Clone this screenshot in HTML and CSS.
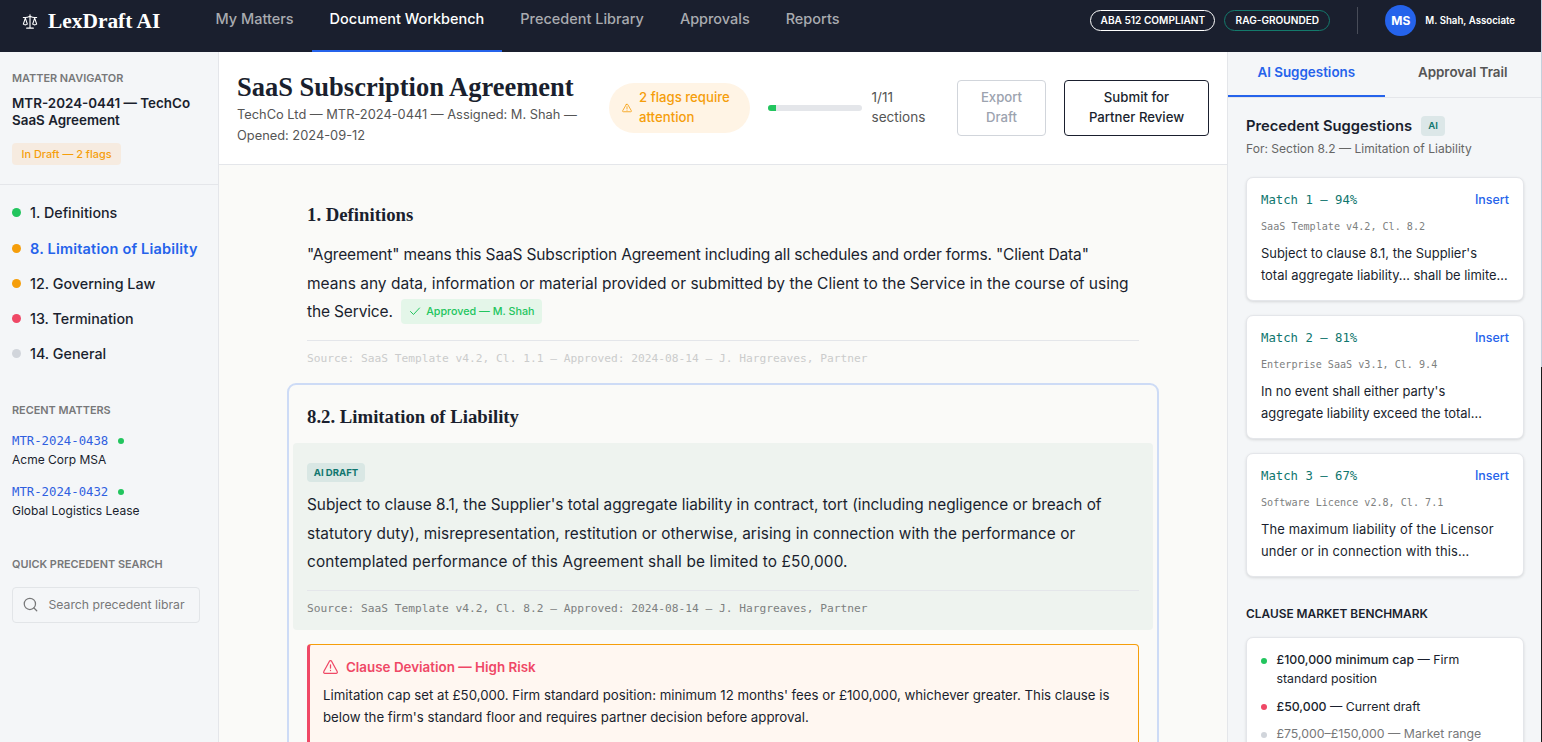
FILE: index.html
```html
<!DOCTYPE html>
<html lang="en">
  <head>
    <meta charset="UTF-8" />
    <title>LexDraft AI</title>
    <link rel="stylesheet" href="styles.css">
  </head>
  <body>
    <header class="topbar">
      <div class="logo">
        <svg class="logo-icon" viewBox="0 0 24 24">
          <path d="m16 16 3-9 3 9c-.9.7-1.900 1-3 1s-2.100-.3-3-1Z" />
          <path d="m2 16 3-9 3 9c-.9.7-1.900 1-3 1s-2.100-.3-3-1Z" />
          <path d="M7 22h10M12 2v20M2 6h3c2 0 5-1 7-2 2 1 5 2 7 2h3" />
        </svg>
        <span class="logo-text">LexDraft AI</span>
      </div>
      <nav class="main-nav">
        <a class="nav-link">My Matters</a>
        <a class="nav-link active">Document Workbench</a>
        <a class="nav-link">Precedent Library</a>
        <a class="nav-link">Approvals</a>
        <a class="nav-link">Reports</a>
      </nav>
      <div class="topbar-right">
        <span class="trust-badge">ABA 512 COMPLIANT</span>
        <span class="trust-badge teal">RAG-GROUNDED</span>
        <span class="divider"></span>
        <span class="avatar">MS</span>
        <span class="user-name">M. Shah, Associate</span>
      </div>
    </header>

    <div class="layout">
      <aside class="sidebar">
        <div class="matter">
          <div class="label">MATTER NAVIGATOR</div>
          <div class="matter-title">MTR-2024-0441 — TechCo<br />SaaS Agreement</div>
          <span class="status-pill">In Draft — 2 flags</span>
        </div>
        <ul class="clauses">
          <li><i class="dot green"></i>1. Definitions</li>
          <li class="current"><i class="dot amber"></i>8. Limitation of Liability</li>
          <li><i class="dot amber"></i>12. Governing Law</li>
          <li><i class="dot red"></i>13. Termination</li>
          <li><i class="dot grey"></i>14. General</li>
        </ul>
        <div class="recent">
          <div class="label">RECENT MATTERS</div>
          <div class="recent-item">
            <div class="recent-id">MTR-2024-0438<i class="dot small green"></i></div>
            <div>Acme Corp MSA</div>
          </div>
          <div class="recent-item">
            <div class="recent-id">MTR-2024-0432<i class="dot small green"></i></div>
            <div>Global Logistics Lease</div>
          </div>
        </div>
        <div class="quick">
          <div class="label">QUICK PRECEDENT SEARCH</div>
          <div class="search">
            <svg class="search-icon" viewBox="0 0 24 24">
              <circle cx="11" cy="11" r="9" />
              <path d="m22 22-4.500-4.500" />
            </svg>
            <span>Search precedent librar</span>
          </div>
        </div>
      </aside>

      <main class="main">
        <div class="doc-header">
          <div class="doc-heading">
            <h1>SaaS Subscription Agreement</h1>
            <p>TechCo Ltd — MTR-2024-0441 — Assigned: M. Shah —<br />Opened: 2024-09-12</p>
          </div>
          <div class="flag-pill">
            <svg class="warn" viewBox="0 0 24 24">
              <path d="M10.300 3.500 1.900 18a2 2 0 0 0 1.700 3h16.800a2 2 0 0 0 1.700-3L13.700 3.500a2 2 0 0 0-3.400 0Z" />
              <path d="M12 9v4.500M12 17v.5" />
            </svg>
            <span>2 flags require<br />attention</span>
          </div>
          <div class="progress">
            <div class="bar"><div class="bar-fill"></div></div>
            <span>1/11<br />sections</span>
          </div>
          <button class="btn export">Export<br />Draft</button>
          <button class="btn submit">Submit for<br />Partner Review</button>
        </div>

        <div class="doc">
          <section class="clause">
            <h2>1. Definitions</h2>
            <p class="clause-text">
              <span class="tight">"Agreement" means this SaaS Subscription Agreement including all schedules and order forms. "Client Data"</span><br />
              means any data, information or material provided or submitted by the Client to the Service in the course of using<br />
              <span class="tight">the Service.</span>
              <span class="approved"><svg class="check" viewBox="0 0 24 24"><path d="m3 13 6 6L21 6" /></svg>Approved — M. Shah</span>
            </p>
            <div class="source faded">Source: SaaS Template v4.2, Cl. 1.1 — Approved: 2024-08-14 — J. Hargreaves, Partner</div>
          </section>

          <section class="clause selected">
            <h2>8.2. Limitation of Liability</h2>
            <div class="draft">
              <span class="ai-tag">AI DRAFT</span>
              <p class="clause-text">
                Subject to clause 8.1, the Supplier's total aggregate liability in contract, tort (including negligence or breach of<br />
                <span class="loose">statutory duty), misrepresentation, restitution or otherwise, arising in connection with the performance or</span><br />
                <span class="looser">contemplated performance of this Agreement shall be limited to £50,000.</span>
              </p>
              <div class="source">Source: SaaS Template v4.2, Cl. 8.2 — Approved: 2024-08-14 — J. Hargreaves, Partner</div>
            </div>
            <div class="deviation">
              <div class="deviation-title">
                <svg class="warn" viewBox="0 0 24 24">
                  <path d="M10.300 3.500 1.300 20a2 2 0 0 0 1.700 3h18a2 2 0 0 0 1.700-3L13.700 3.500a2 2 0 0 0-3.400 0Z" />
                  <path d="M12 9.500v5M12 18v.5" />
                </svg>
                Clause Deviation — High Risk
              </div>
              <p>
                Limitation cap set at £50,000. Firm standard position: minimum 12 months' fees or £100,000, whichever greater. This clause is<br />
                below the firm's standard floor and requires partner decision before approval.
              </p>
            </div>
          </section>
        </div>
      </main>

      <aside class="panel">
        <div class="tabs">
          <a class="tab active">AI Suggestions</a>
          <a class="tab">Approval Trail</a>
        </div>
        <div class="panel-body">
          <div class="panel-title">Precedent Suggestions <span class="ai-chip">AI</span></div>
          <div class="panel-sub">For: Section 8.2 — Limitation of Liability</div>

          <div class="card">
            <div class="card-head"><span class="match">Match 1 — 94%</span><a class="insert">Insert</a></div>
            <div class="card-source">SaaS Template v4.2, Cl. 8.2</div>
            <p>Subject to clause 8.1, the Supplier's<br />total aggregate liability… shall be limite…</p>
          </div>
          <div class="card">
            <div class="card-head"><span class="match">Match 2 — 81%</span><a class="insert">Insert</a></div>
            <div class="card-source">Enterprise SaaS v3.1, Cl. 9.4</div>
            <p>In no event shall either party's<br />aggregate liability exceed the total…</p>
          </div>
          <div class="card">
            <div class="card-head"><span class="match">Match 3 — 67%</span><a class="insert">Insert</a></div>
            <div class="card-source">Software Licence v2.8, Cl. 7.1</div>
            <p class="loose">The maximum liability of the Licensor<br />under or in connection with this…</p>
          </div>

          <h3>CLAUSE MARKET BENCHMARK</h3>
          <ul class="benchmark">
            <li><i class="dot small green"></i><span><b>£100,000 minimum cap</b> — Firm<br />standard position</span></li>
            <li><i class="dot small red"></i><span><b>£50,000</b> — Current draft</span></li>
            <li class="muted"><i class="dot small grey"></i><span>£75,000–£150,000 — Market range</span></li>
          </ul>
        </div>
      </aside>
    </div>
    <div class="page-edge"></div>
  </body>
</html>
```
FILE: styles.css
```css
* {
  box-sizing: border-box;
}

body {
  margin: 0;
  height: 742px;
  overflow: hidden;
  padding-right: 1px;
  background: #fafaf8;
  color: #1a1f2e;
  font-family: "Inter", sans-serif;
  font-size: 14px;
  white-space: nowrap;
}

h1,
h2,
h3,
p,
ul {
  margin: 0;
  padding: 0;
}

ul {
  list-style: none;
}

svg {
  fill: none;
  stroke: currentColor;
  stroke-width: 2;
  stroke-linecap: round;
  stroke-linejoin: round;
  flex: none;
}

.topbar {
  display: flex;
  height: 52px;
  padding: 0 26px 0 22px;
  background: #1a1f2e;
  color: #fff;
}

.logo {
  display: flex;
  align-items: center;
  gap: 10px;
  width: 175.5px;
  height: 42px;
}

.logo-icon {
  width: 16px;
  height: 17px;
  stroke-width: 1.7;
}

.logo-text {
  font-family: "Liberation Serif", serif;
  font-weight: 700;
  font-size: 21.4px;
}

.main-nav {
  display: flex;
}

.nav-link {
  height: 52px;
  padding: 0 18px;
  line-height: 38px;
  font-size: 14.48px;
  font-weight: 500;
  color: #a9abb0;
}

.nav-link.active {
  color: #fff;
  border-bottom: 2px solid #2563eb;
}

.topbar-right {
  display: flex;
  align-items: center;
  height: 41px;
  margin-left: auto;
}

.trust-badge {
  height: 21px;
  width: 125px;
  margin-right: 9px;
  border: 1px solid #fff;
  border-radius: 11px;
  font-size: 10.1px;
  line-height: 19px;
  font-weight: 600;
  text-align: center;
}

.trust-badge.teal {
  width: 106px;
  margin-right: 27px;
  border-color: #147a6c;
}

.divider {
  width: 1px;
  height: 27px;
  margin-right: 27px;
  background: #484c58;
}

.avatar {
  width: 31px;
  height: 31px;
  margin-right: 9px;
  border-radius: 50%;
  background: #2563eb;
  font-size: 12px;
  font-weight: 700;
  line-height: 31px;
  text-align: center;
}

.user-name {
  font-size: 9.7px;
  font-weight: 600;
}

.layout {
  display: grid;
  grid-template-columns: 219px 1fr 314px;
  height: 690px;
}

/* left column */
.sidebar {
  background: #f4f6f8;
  border-right: 1px solid #e4e6ea;
}

.matter {
  height: 133px;
  padding: 18px 12px;
  border-bottom: 1px solid #e4e6ea;
}

.label {
  font-size: 10.9px;
  line-height: 16px;
  font-weight: 600;
  color: #777879;
}

.matter-title {
  margin: 9px 0 14px;
  font-size: 13.4px;
  line-height: 17px;
  font-weight: 600;
}

.status-pill {
  display: block;
  width: 109px;
  height: 22px;
  border-radius: 4px;
  background: #f6ebe0;
  color: #f59e0b;
  font-size: 10.9px;
  line-height: 22px;
  font-weight: 500;
  text-align: center;
}

.clauses {
  padding: 10.4px 12px 0;
}

.clauses li {
  display: flex;
  align-items: center;
  height: 35.2px;
  font-size: 14.3px;
  font-weight: 500;
}

.clauses li.current {
  color: #2563eb;
  font-weight: 600;
  font-size: 14.5px;
  letter-spacing: 0.2px;
}

.dot {
  width: 9px;
  height: 9px;
  margin-right: 9px;
  border-radius: 50%;
  flex: none;
}

.dot.small {
  width: 6px;
  height: 6px;
}

.dot.green {
  background: #22c55e;
}

.dot.amber {
  background: #f59e0b;
}

.dot.red {
  background: #ef4866;
}

.dot.grey {
  background: #d1d5db;
}

.recent {
  padding: 30.6px 12px 0;
  font-size: 12px;
  line-height: 19px;
}

.recent-item {
  margin-top: 13px;
}

.recent-id {
  display: flex;
  align-items: center;
  gap: 10px;
  height: 19px;
  padding-top: 2px;
  color: #2f5fe0;
  font-family: "DejaVu Sans Mono", monospace;
  font-size: 12.3px;
}

.quick {
  padding: 36px 18px 0 12px;
}

.search {
  display: flex;
  align-items: center;
  gap: 10.5px;
  height: 36px;
  margin-top: 15px;
  padding: 0 10px;
  border: 1px solid #e2e5e8;
  border-radius: 4px;
  color: #777879;
  font-size: 12.24px;
}

.search-icon {
  width: 15px;
  height: 15px;
}

/* document */
.main {
  overflow: hidden;
}

.doc-header {
  display: flex;
  align-items: center;
  gap: 18px;
  height: 113px;
  padding: 0 18px;
  border-bottom: 1px solid #e4e6ea;
  background: #fff;
  font-size: 13.2px;
  line-height: 20px;
}

.doc-heading {
  width: 354px;
}

.doc-heading h1 {
  font-family: "Liberation Serif", serif;
  font-size: 26.5px;
  line-height: 34px;
}

.doc-heading p {
  font-size: 12.84px;
  line-height: 21px;
  color: #555;
}

.flag-pill {
  display: flex;
  align-items: center;
  gap: 7px;
  width: 141px;
  height: 50px;
  padding-left: 13px;
  border-radius: 25px;
  background: #fff4e5;
  color: #f59e0b;
  font-weight: 500;
}

.flag-pill span,
.progress span {
  padding-bottom: 2px;
}

.flag-pill .warn {
  width: 10px;
  height: 10px;
}

.progress {
  display: flex;
  align-items: center;
  gap: 9.5px;
  width: 171px;
  color: #555;
  font-size: 13.6px;
}

.bar {
  width: 94px;
  height: 6px;
  border-radius: 3px;
  overflow: hidden;
  background: #e4e6ea;
}

.bar-fill {
  width: 9%;
  height: 100%;
  background: #22c55e;
}

.btn {
  height: 56px;
  padding: 0 0 2px;
  border-radius: 4px;
  background: #fff;
  font: 500 13.2px/20px "Inter", sans-serif;
}

.export {
  width: 89px;
  border: 1px solid #d1d5db;
  color: #9ca3af;
}

.submit {
  width: 145px;
  border: 1px solid #1a1f2e;
  color: #1a1f2e;
}

.doc {
  padding: 37px 68px 0;
}

.clause {
  padding: 0 20px;
}

.clause h2 {
  font-family: "Liberation Serif", serif;
  font-size: 18.75px;
  line-height: 26px;
}

.clause-text {
  margin-top: 13px;
  font-size: 15.52px;
  line-height: 28.6px;
}

.tight {
  letter-spacing: -0.155px;
}

.loose {
  letter-spacing: 0.06px;
}

.looser {
  letter-spacing: 0.13px;
}

.approved {
  display: inline-flex;
  align-items: center;
  gap: 5px;
  height: 25px;
  margin: -3px 0 0 4px;
  padding: 0 7px 0 8px;
  border-radius: 4px;
  background: #e4f6e9;
  color: #22c55e;
  font-size: 10.75px;
  line-height: 25px;
  font-weight: 500;
  vertical-align: middle;
}

.check {
  width: 12px;
  height: 12px;
}

.source {
  margin-top: 13px;
  padding-top: 10px;
  border-top: 1px solid #e4e6ea;
  font-family: "DejaVu Sans Mono", monospace;
  font-size: 11.22px;
  line-height: 16px;
  color: #7d8080;
}

.source.faded {
  color: #cbcccc;
}

.clause.selected {
  height: 480px;
  margin-top: 16px;
  padding: 19px 18px 0;
  border: 2px solid #cddbf6;
  border-radius: 9px;
}

.draft {
  height: 187px;
  margin: 13px -14px 0;
  padding: 20px 14px 0;
  border-radius: 4px;
  background: #eef3ef;
}

.ai-tag {
  display: block;
  width: 58px;
  height: 19px;
  border-radius: 4px;
  background: #d9e7e4;
  color: #0f766e;
  font-size: 9.6px;
  line-height: 19px;
  font-weight: 700;
  text-align: center;
}

.draft .clause-text {
  margin-top: 9.4px;
  font-size: 15.37px;
}

.deviation {
  height: 200px;
  margin-top: 14px;
  padding: 12px 13px;
  border: 1px solid #f59e0b;
  border-left: 3px solid #ef4866;
  border-radius: 4px;
  background: #fff7f1;
}

.deviation-title {
  display: flex;
  align-items: center;
  gap: 8px;
  color: #ef4866;
  font-size: 13.4px;
  line-height: 20px;
  font-weight: 600;
}

.deviation .warn {
  width: 15px;
  height: 15px;
}

.deviation p {
  margin-top: 7px;
  font-size: 13.24px;
  line-height: 22px;
}

/* right column */
.panel {
  border-left: 1px solid #e4e6ea;
  background: #f4f6f8;
  overflow: hidden;
}

.tabs {
  display: flex;
  height: 46px;
  border-bottom: 1px solid #e4e6ea;
}

.tab {
  flex: 1;
  height: 45px;
  font-size: 13.4px;
  line-height: 41px;
  font-weight: 600;
  color: #555;
  text-align: center;
}

.tab.active {
  color: #2563eb;
  border-bottom: 2px solid #2563eb;
}

.panel-body {
  padding: 18px 17px 0 18px;
}

.panel-title {
  display: flex;
  align-items: center;
  gap: 9px;
  height: 20px;
  font-size: 14.75px;
  font-weight: 600;
}

.ai-chip {
  width: 24px;
  height: 20px;
  border-radius: 4px;
  background: #dce7e8;
  color: #0f766e;
  font-size: 9.6px;
  line-height: 20px;
  text-align: center;
}

.panel-sub {
  margin: 3px 0 18px;
  font-size: 12.07px;
  line-height: 20px;
  color: #666;
}

.card,
.benchmark {
  border: 1px solid #e4e6ea;
  border-radius: 7px;
  background: #fff;
  box-shadow: 0 1px 3px rgba(0, 0, 0, 0.12);
}

.card {
  height: 124px;
  margin-bottom: 14px;
  padding: 12px 14px;
}

.card-head {
  display: flex;
  justify-content: space-between;
  line-height: 20px;
}

.match {
  font-family: "DejaVu Sans Mono", monospace;
  font-size: 12.3px;
  color: #0f766e;
}

.insert {
  font-size: 12.4px;
  font-weight: 500;
  color: #2563eb;
}

.card-source {
  margin: 9px 0 7px;
  font-family: "DejaVu Sans Mono", monospace;
  font-size: 10.1px;
  line-height: 16px;
  color: #7d8080;
}

.card p {
  font-size: 12.95px;
  line-height: 22px;
}

.card p.loose {
  letter-spacing: 0.13px;
}

.panel h3 {
  margin: 27px 0 13px;
  font-size: 11.9px;
  line-height: 20px;
  font-weight: 600;
}

.benchmark {
  height: 160px;
  padding: 12px 14px;
  font-size: 12.3px;
  line-height: 19px;
}

.benchmark li {
  display: flex;
  margin-bottom: 8.5px;
}

.benchmark .dot {
  margin: 7.5px 9.5px 0 0;
}

.benchmark b {
  font-weight: 500;
}

.benchmark .muted {
  color: #777879;
}

/* page scrollbar, seen as a thin strip at the right edge */
.page-edge {
  position: fixed;
  top: 0;
  right: 0;
  width: 1px;
  height: 100%;
  background: linear-gradient(#c5d0dc 367px, #1c1c1c 367px);
}
```
